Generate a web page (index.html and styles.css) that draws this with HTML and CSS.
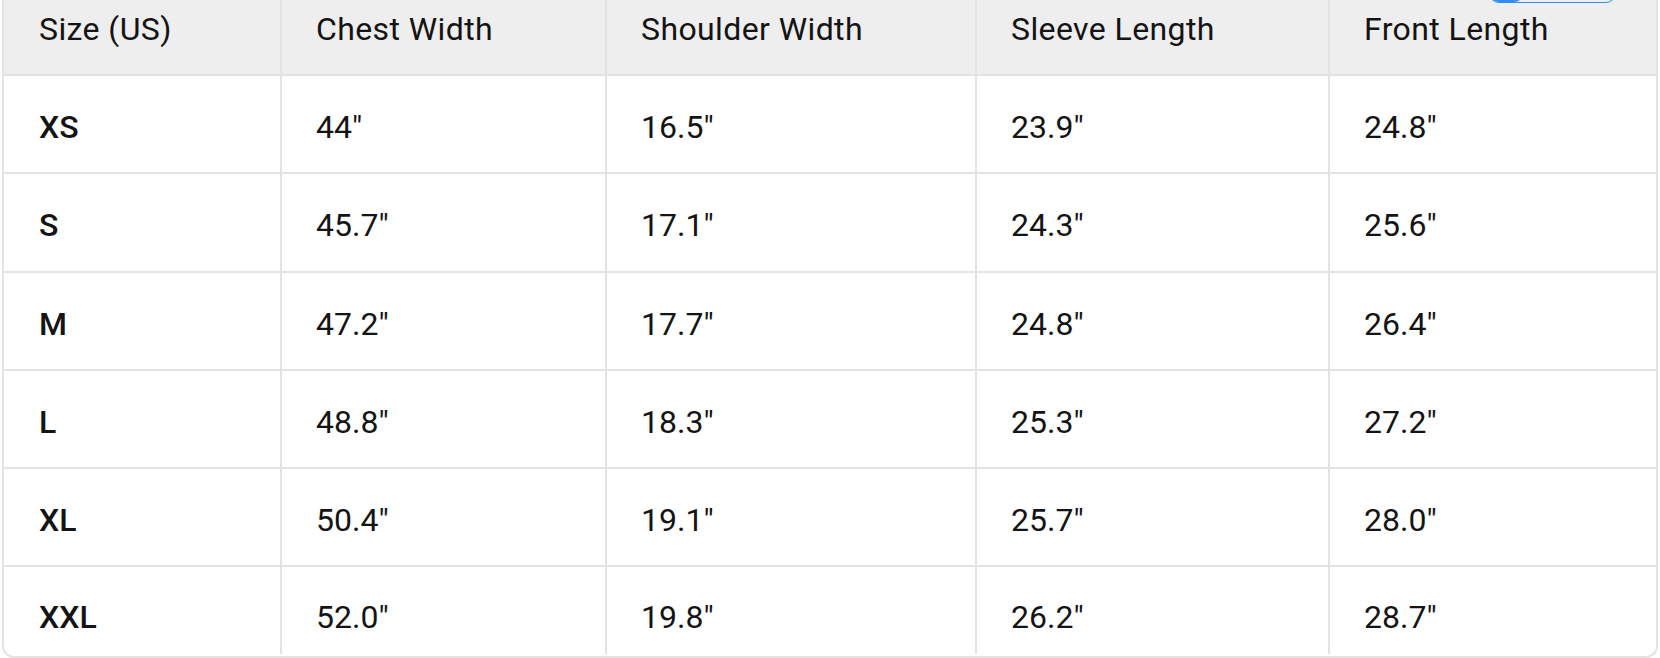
FILE: index.html
```html
<!DOCTYPE html>
<html lang="en">
<head>
<meta charset="utf-8">
<title>Size chart</title>
<link rel="stylesheet" href="styles.css">
</head>
<body>
<div class="page">
  <div class="unit-toggle"><span class="unit-on"></span></div>
  <div class="chart">
    <table class="size-table">
      <colgroup>
        <col class="c1"><col class="c2"><col class="c3"><col class="c4"><col class="c5">
      </colgroup>
      <thead>
        <tr><th>Size (US)</th><th>Chest Width</th><th>Shoulder Width</th><th>Sleeve Length</th><th>Front Length</th></tr>
      </thead>
      <tbody>
        <tr><td class="size">XS</td><td>44"</td><td>16.5"</td><td>23.9"</td><td>24.8"</td></tr>
        <tr><td class="size">S</td><td>45.7"</td><td>17.1"</td><td>24.3"</td><td>25.6"</td></tr>
        <tr><td class="size">M</td><td>47.2"</td><td>17.7"</td><td>24.8"</td><td>26.4"</td></tr>
        <tr><td class="size">L</td><td>48.8"</td><td>18.3"</td><td>25.3"</td><td>27.2"</td></tr>
        <tr><td class="size">XL</td><td>50.4"</td><td>19.1"</td><td>25.7"</td><td>28.0"</td></tr>
        <tr class="last"><td class="size">XXL</td><td>52.0"</td><td>19.8"</td><td>26.2"</td><td>28.7"</td></tr>
      </tbody>
    </table>
  </div>
</div>
</body>
</html>
```

FILE: styles.css
```css
* { box-sizing: border-box; }
html, body { margin: 0; padding: 0; background: #ffffff; }
body {
  font-family: Roboto, "Liberation Sans", Arial, sans-serif;
  color: #141414;
  width: 1660px;
  height: 658px;
  overflow: hidden;
}
.page { position: relative; padding: 0 2px; }
.unit-toggle {
  position: absolute;
  top: -30px;
  left: 1489px;
  width: 127px;
  height: 33px;
  border: 1.5px solid #2f8ff5;
  border-radius: 10px;
  overflow: hidden;
  z-index: 2;
}
.unit-on {
  display: block;
  width: 34px;
  height: 100%;
  background: #2f8ff5;
  border-radius: 0 10px 10px 0;
}
.chart {
  border: 2px solid #e3e3e3;
  border-top: none;
  border-radius: 0 0 12px 12px;
  overflow: hidden;
  height: 658px;
}
.size-table {
  width: 100%;
  border-collapse: separate;
  border-spacing: 0;
  table-layout: fixed;
  font-size: 32px;
}
.c1 { width: 276px; }
.c2 { width: 325px; }
.c3 { width: 370px; }
.c4 { width: 353px; }
.c5 { width: auto; }
th, td {
  text-align: left;
  padding: 0 0 0 34px;
  border-bottom: 2px solid #e3e3e3;
  border-left: 2px solid #e3e3e3;
  white-space: nowrap;
}
th:first-child, td:first-child { border-left: none; padding-left: 35px; }
th {
  background: #eeeeee;
  font-weight: 400;
  letter-spacing: 0.4px;
  height: 76px;
  padding-bottom: 16px;
}
td {
  height: 98.3px;
  padding-top: 6px;
}
td.size { font-weight: 500; }
tr.last td { border-bottom: none; height: 87px; padding-top: 12px; }
```
